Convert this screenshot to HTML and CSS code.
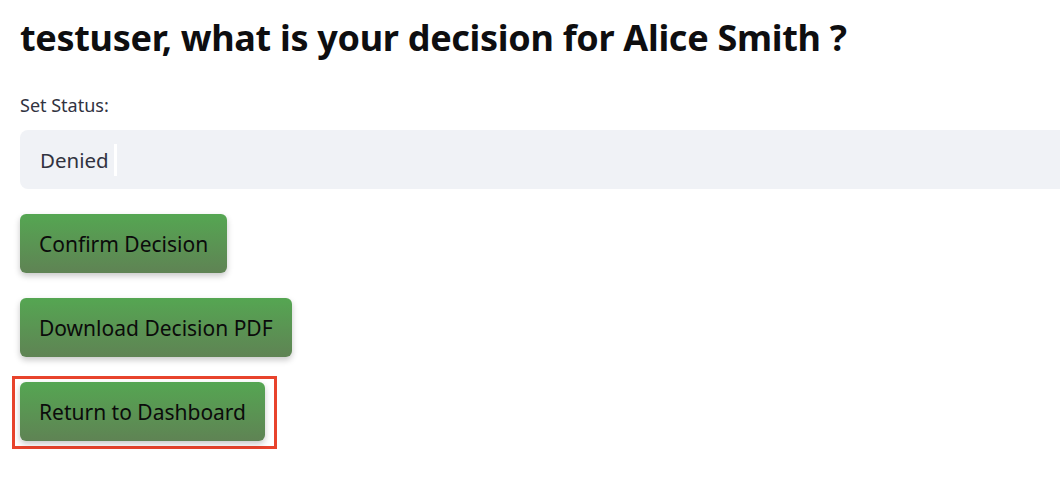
FILE: index.html
```html
<!DOCTYPE html>
<html>
<head>
<meta charset="utf-8">
<link rel="stylesheet" href="styles.css">
</head>
<body>
<main class="page">
  <h1 class="title">testuser, what is your decision for Alice Smith ?</h1>
  <div class="field">
    <label class="label">Set Status:</label>
    <div class="input"><span class="value">Denied</span><span class="caret"></span></div>
  </div>
  <div class="actions">
    <div class="btn-wrap"><button class="btn">Confirm Decision</button></div>
    <div class="btn-wrap"><button class="btn">Download Decision PDF</button></div>
    <div class="btn-wrap highlight"><button class="btn">Return to Dashboard</button></div>
  </div>
</main>
</body>
</html>
```
FILE: styles.css
```css
html, body {
  margin: 0;
  padding: 0;
  background: #ffffff;
}
.page {
  padding: 14px 0 0 20px;
  font-family: "Noto Sans", "Open Sans", sans-serif;
  color: #31333f;
}
.title {
  margin: 0;
  font-size: 36px;
  font-weight: 700;
  color: #0e0e10;
  line-height: 48px;
  letter-spacing: -0.3px;
  white-space: nowrap;
}
.field {
  margin-top: 31px;
}
.label {
  display: block;
  font-size: 18px;
  line-height: 24px;
  color: #31333f;
}
.input {
  margin-top: 13px;
  height: 59px;
  margin-right: -20px;
  background: #f0f2f6;
  border-radius: 8px;
  display: flex;
  align-items: center;
  padding-left: 20px;
}
.value {
  font-size: 20.5px;
  color: #31333f;
}
.caret {
  width: 3px;
  height: 32px;
  background: #ffffff;
  margin-left: 5px;
}
.actions {
  margin-top: 25px;
  display: flex;
  flex-direction: column;
  align-items: flex-start;
  gap: 25px;
}
.btn-wrap {
  display: flex;
}
.btn {
  height: 59px;
  padding: 0 19px;
  border: none;
  border-radius: 6px;
  background: linear-gradient(180deg, #55a652 0%, #5f8354 100%);
  box-shadow: 0 3px 6px rgba(0,0,0,0.22);
  font-family: "Noto Sans", "Open Sans", sans-serif;
  font-size: 21px;
  color: #0b0b0b;
  cursor: pointer;
}
.highlight {
  border: 3px solid #e8432c;
  padding: 3px 9px 5px 5px;
  margin: -6px 0 0 -8px;
}
```
